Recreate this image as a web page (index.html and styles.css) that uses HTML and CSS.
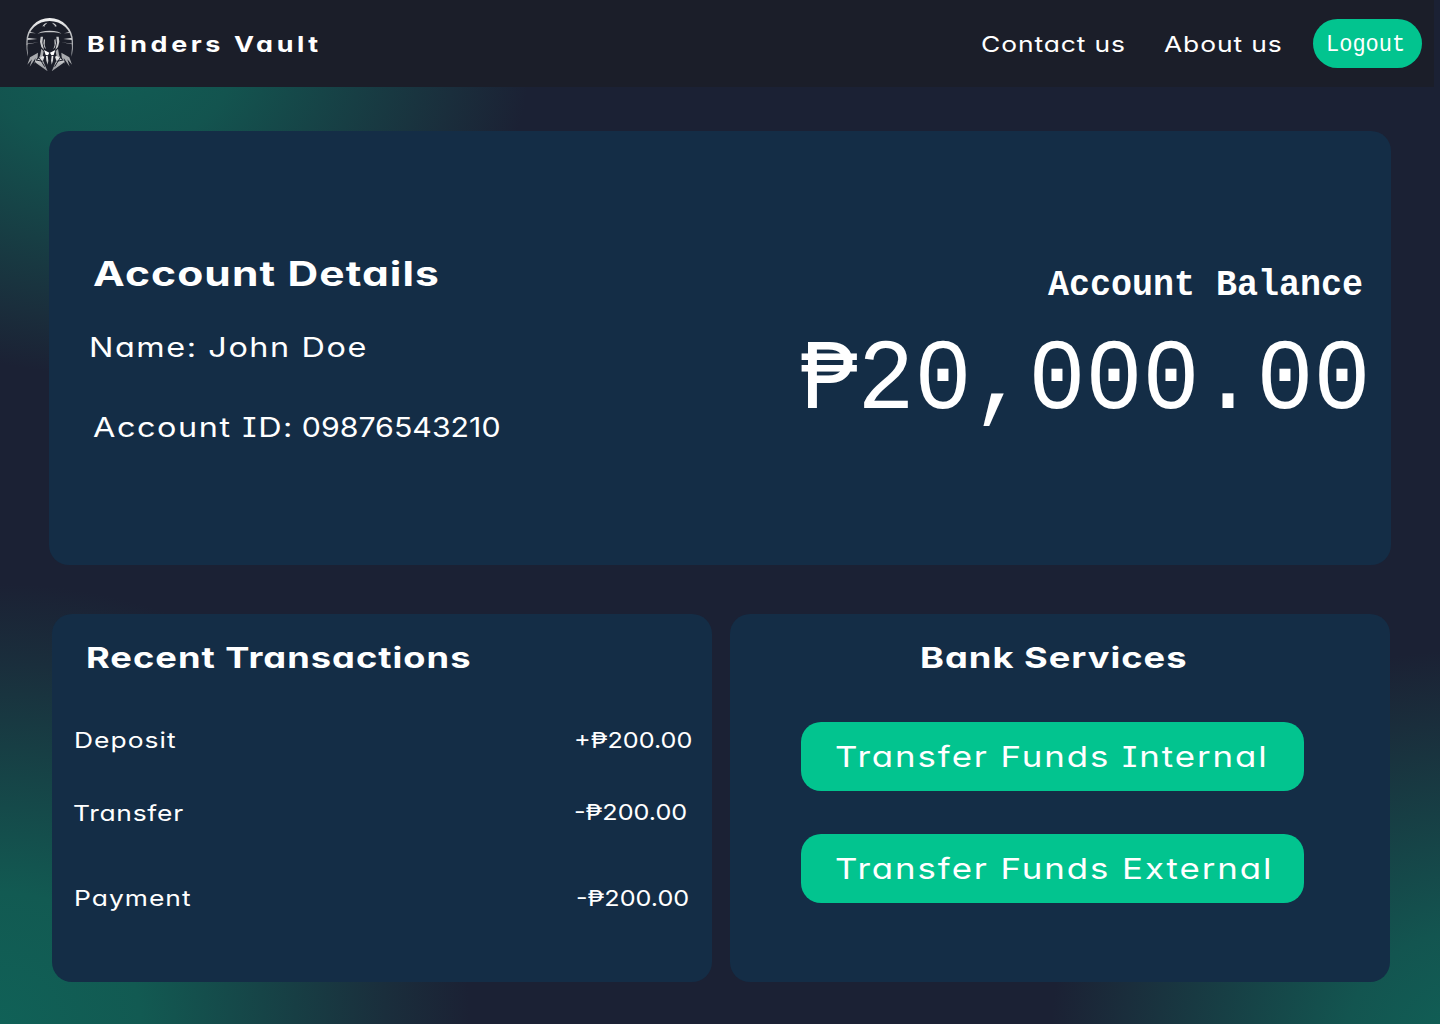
FILE: index.html
```html
<!DOCTYPE html>
<html lang="en">
<head>
<meta charset="utf-8">
<title>Blinders Vault</title>
<link rel="stylesheet" href="styles.css">
</head>
<body>
<header class="topbar">
  <svg class="logo" viewBox="36 21 144 162" aria-hidden="true">
    <defs>
      <linearGradient id="silver" x1="0" y1="0" x2="0" y2="1">
        <stop offset="0" stop-color="#f4f4f4"/>
        <stop offset=".5" stop-color="#b5b7ba"/>
        <stop offset="1" stop-color="#8b8e94"/>
      </linearGradient>
    </defs>
    <path fill="url(#silver)" d="M41 140Q36 118 37 95A70 71 0 0 1 177 95Q179 118 173 140L172 130Q175 112 173 95A66 62 0 0 0 41 95Q39 112 42 130z"/>
    <g fill="#c9cacc">
      <path d="M85 50q4-11 15-12l-4 5q-5 2-5 8l-3-3zM129 50q-4-11-15-12l4 5q5 2 5 8l3-3z"/>
      <path d="M70 71q12-7 24-8 13-2 26 0 12 1 24 8-12-3-24-4-13-1-26 0-12 1-24 4z"/>
      <path d="M40 83l30 4-30 3zM38 105l0-4 36-4-34 6zM48 66l18 4-19-1zM174 83l-26 4 26 3zM176 105l0-4-34-4 33 6zM166 66l-16 4 17-1z"/>
      <path d="M80 80l7 0-2 18 5 22-8-9-4-16zM134 80l-7 0 2 18-5 22 8-9 4-16zM90 86l3 4-1 15 4 13-5-6-3-12zM124 86l-3 4 1 15-4 13 5-6 3-12z"/>
    </g>
    <g fill="#a9abae">
      <path d="M82 116l7 8-4 22-14 8q10-18 11-38zM132 116l-7 8 4 22 14 8q-10-18-11-38z"/>
      <path d="M72 128L48 142l-8 22 14-16-7 22 18-26-4 18 10-20zM142 128l24 14 8 22-14-16 7 22-18-26 4 18-10-20z"/>
    </g>
    <path fill="#fff" d="M90 120l16 8-4 8-7-1zM124 120l-16 8 4 8 7-1z"/>
    <path fill="url(#silver)" d="M86 138l5 2-4 12 14 32-36-26-2-4zM128 138l-5 2 4 12-14 32 36-26 2-4zM96 138l5 0 2 14-2 12-4-12zM118 138l-5 0-2 14 2 12 4-12z"/>
    <path stroke="#1b1e29" stroke-width="3" fill="none" d="M66 150l20 4M148 150l-20 4M76 144l16 26M138 144l-16 26"/>
  </svg>
  <span class="brand wide">Blinders Vault</span>
  <nav class="nav">
    <a class="contact"><span class="wide">Contact us</span></a>
    <a class="about"><span class="wide">About us</span></a>
    <a class="logout mono"><span>Logout</span></a>
  </nav>
</header>
<main>
  <section class="card account">
    <div class="details">
      <h1 class="wide">Account Details</h1>
      <p class="holder"><span class="wide">Name: John Doe</span></p>
      <p class="number"><span class="wide">Account ID: <span class="digits">09876543210</span></span></p>
    </div>
    <div class="balance mono">
      <h2>Account Balance</h2>
      <p class="total">₱20,000.00</p>
    </div>
  </section>
  <div class="columns">
    <section class="card transactions">
      <h2 class="wide">Recent Transactions</h2>
      <ul>
        <li class="deposit"><span class="wide">Deposit</span><span class="wide amount">+₱200.00</span></li>
        <li class="transfer"><span class="wide">Transfer</span><span class="wide amount">-₱200.00</span></li>
        <li class="payment"><span class="wide">Payment</span><span class="wide amount">-₱200.00</span></li>
      </ul>
    </section>
    <section class="card services">
      <h2 class="wide">Bank Services</h2>
      <button><span class="wide">Transfer Funds Internal</span></button>
      <button><span class="wide">Transfer Funds External</span></button>
    </section>
  </div>
</main>
</body>
</html>
```
FILE: styles.css
```css
* { box-sizing: border-box; margin: 0; padding: 0; }

body {
  width: 1440px;
  height: 1024px;
  overflow: hidden;
  color: #fff;
  font-family: "Inter", sans-serif;
  font-feature-settings: "cv11", "cv08";
  background:
    radial-gradient(ellipse 420px 320px at 110px 55px, #115e55 0%, #13544f 30%, #1a2e3c 82%, rgba(27, 33, 52, 0) 100%),
    radial-gradient(ellipse 470px 440px at 0 1024px, #106157 0%, #125a52 30%, #1a2e3c 82%, rgba(27, 33, 52, 0) 100%),
    radial-gradient(ellipse 420px 400px at 1470px 1050px, #106157 0%, #135550 30%, #1a2e3c 82%, rgba(27, 33, 52, 0) 100%),
    #1b2134;
}

.wide {
  display: inline-block;
  white-space: nowrap;
  transform: scaleX(1.2);
  transform-origin: left center;
}
h1.wide, h2.wide, .brand.wide { transform: scaleX(1.25); }

.mono { font-family: "Liberation Mono", monospace; }

.topbar {
  display: flex;
  align-items: center;
  width: 1434px;
  height: 87px;
  padding: 0 12px 0 26px;
  background: #1b1e29;
}
.logo { width: 48px; height: 54px; }
.brand {
  margin: 1px 0 0 13px;
  font-size: 21.5px;
  font-weight: 700;
  letter-spacing: 2.9px;
}
.nav {
  display: flex;
  align-items: center;
  margin-left: auto;
  font-size: 22px;
  letter-spacing: .75px;
}
.contact { width: 182.5px; padding-top: 1px; }
.about { width: 149.5px; padding-top: 1px; }
.logout {
  width: 109px;
  height: 49px;
  padding-left: 13px;
  border-radius: 24.5px;
  background: #02c48f;
  line-height: 53px;
  letter-spacing: 0;
}
.logout span { display: inline-block; transform: scaleY(1.08); transform-origin: 0 60%; }

main { padding: 44px 49px 0; }
.card { background: #142d46; border-radius: 20px; }

.account {
  display: flex;
  justify-content: space-between;
  height: 434px;
}
.details { padding: 121px 0 0 39.5px; }
.details h1 {
  display: block;
  margin-left: 4.5px;
  font-size: 34px;
  line-height: 44px;
  letter-spacing: .9px;
}
.details p { font-size: 27px; line-height: 34px; letter-spacing: 1.3px; }
.holder { margin-top: 35px; }
.number { margin: 46px 0 0 4.5px; }
.digits {
  display: inline-block;
  margin-left: -2px;
  letter-spacing: 0;
  transform: scaleX(.935);
  transform-origin: left center;
}

.balance { padding: 133px 20.5px 0 0; text-align: right; }
.balance h2 {
  margin-right: 7.5px;
  font-size: 35px;
  line-height: 44px;
  transform: scaleY(1.07);
  transform-origin: 0 31px;
}
.total {
  margin-top: 25px;
  font-size: 95px;
  line-height: 100px;
  transform: scaleY(1.05);
  transform-origin: 0 75px;
}

.columns {
  display: grid;
  grid-template-columns: 660px 660px;
  gap: 18px;
  margin: 49px 0 0 3px;
}
.columns .card { height: 368px; padding-top: 24px; }
.columns h2 {
  display: block;
  font-size: 29px;
  line-height: 40px;
}
.transactions h2 { margin-left: 33.5px; letter-spacing: .8px; }
.transactions ul { margin: 48px 0 0 22px; list-style: none; }
.transactions li {
  display: grid;
  grid-template-columns: 499.5px auto;
  font-size: 22px;
  line-height: 28px;
  letter-spacing: .85px;
}
.transactions .amount { letter-spacing: 0; transform: scaleX(1.145); }
.transfer { margin-top: 45px; }
.transfer .wide:first-child { letter-spacing: .6px; margin-left: -1px; }
.transfer .amount { margin-top: -1px; }
.payment { margin-top: 57px; }
.payment .amount { margin-left: 2px; }

.services h2 { margin: 0 0 44px 189.5px; letter-spacing: .8px; }
.services button {
  display: block;
  width: 503px;
  height: 68.5px;
  margin: 0 0 43.5px 71px;
  padding: 1px 0 0 34px;
  border: 0;
  border-radius: 20px;
  background: #02c48f;
  color: inherit;
  font: 400 29px/67.5px "Inter", sans-serif;
  font-feature-settings: inherit;
  letter-spacing: 1.6px;
  text-align: left;
}
```
